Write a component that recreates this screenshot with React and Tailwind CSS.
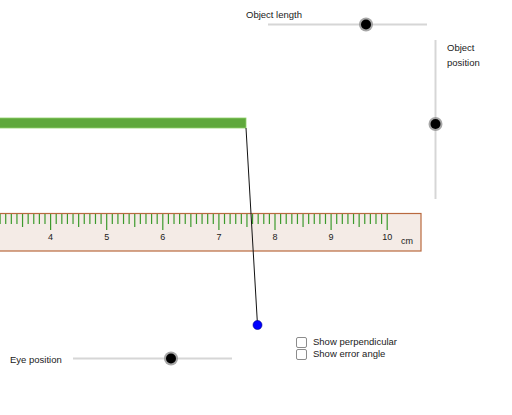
import React from 'react';

const font = { fontFamily: '"Liberation Sans", Arial, sans-serif' };

// ruler geometry: 1 mm = 5.61px, 0 cm sits off the left edge
const MM = 5.61;
const ORIGIN = -173.8;

const Knob = ({ cx, cy }) => (
  <g>
    <circle cx={cx} cy={cy} r="7" fill="#8a8a8a" opacity="0.75" />
    <circle cx={cx} cy={cy} r="5" fill="#000" />
  </g>
);

const Checkbox = ({ label }) => (
  <label className="flex items-center gap-[6px] h-[12px]">
    <span className="block w-[11px] h-[11px] rounded-[2px] border border-[#8c8c8c] bg-white" />
    <span className="text-[9.5px] text-[#1a1a1a] leading-none">{label}</span>
  </label>
);

export default function App() {
  const ticks = [];
  for (let k = 31; k <= 100; k++) {
    const x = ORIGIN + k * MM;
    const len = k % 10 === 0 ? 16 : k % 5 === 0 ? 13 : 10;
    ticks.push(<line key={k} x1={x} y1={214} x2={x} y2={214 + len} stroke="#3c9a2c" strokeWidth="1.2" />);
  }
  const labels = [4, 5, 6, 7, 8, 9, 10];

  return (
    <div className="relative w-[512px] h-[415px] bg-white overflow-hidden" style={font}>
      <svg className="absolute inset-0" width="512" height="415" viewBox="0 0 512 415">
        {/* ruler */}
        <rect x="-10" y="213.5" width="431" height="37.5" fill="#f4ebe6" stroke="#b9693f" strokeWidth="1.2" />
        {ticks}
        {labels.map((n) => (
          <text key={n} x={ORIGIN + n * 10 * MM} y="240" fontSize="9" textAnchor="middle" fill="#1a1a1a">
            {n}
          </text>
        ))}
        <text x="401" y="244" fontSize="9" fill="#1a1a1a">cm</text>

        {/* object */}
        <rect x="-2" y="118" width="248" height="10" fill="#5fa83c" stroke="#8fd06a" strokeWidth="0.8" />
        <line x1="246" y1="128" x2="257.5" y2="325" stroke="#111" strokeWidth="1" />
        <circle cx="257.5" cy="325" r="4.5" fill="#0000ff" stroke="#00008a" strokeWidth="0.6" />

        {/* sliders */}
        <line x1="268" y1="24.5" x2="427" y2="24.5" stroke="#d6d6d6" strokeWidth="2" />
        <Knob cx={366} cy={24.5} />
        <line x1="435.5" y1="40" x2="435.5" y2="199" stroke="#d6d6d6" strokeWidth="2" />
        <Knob cx={435.5} cy={124} />
        <line x1="73" y1="358.5" x2="232" y2="358.5" stroke="#d6d6d6" strokeWidth="2" />
        <Knob cx={171} cy={358.5} />
      </svg>

      <div className="absolute left-[246px] top-[8px] text-[9.5px] text-[#1a1a1a]">Object length</div>
      <div className="absolute left-[447px] top-[40px] text-[9.5px] text-[#1a1a1a] leading-[15px]">
        <div>Object</div>
        <div>position</div>
      </div>
      <div className="absolute left-[10px] top-[353px] text-[9.5px] text-[#1a1a1a]">Eye position</div>

      <div className="absolute left-[296px] top-[336px] flex flex-col">
        <Checkbox label="Show perpendicular" />
        <Checkbox label="Show error angle" />
      </div>
    </div>
  );
}
